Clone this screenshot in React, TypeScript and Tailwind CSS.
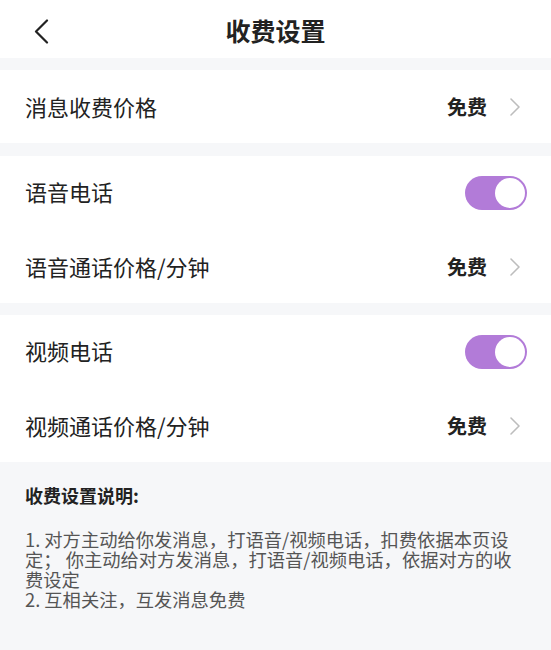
import React from "react";

const font = { fontFamily: '"Noto Sans CJK SC", "Noto Sans", sans-serif' };

function Chevron() {
  return (
    <svg width="12" height="20" viewBox="0 0 12 20" fill="none">
      <path d="M2 2 L10 10 L2 18" stroke="#bdbdbd" strokeWidth="1.6" strokeLinecap="round" strokeLinejoin="round" />
    </svg>
  );
}

function Toggle() {
  return (
    <div className="w-[62px] h-[34px] rounded-full bg-[#b27bd8] flex items-center justify-end pr-[2px]">
      <div className="w-[30px] h-[30px] rounded-full bg-white" />
    </div>
  );
}

function PriceRow({ label }: { label: string }) {
  return (
    <div className="h-[73px] flex items-center justify-between pl-[25px] pr-[30px]">
      <span className="text-[22px] text-[#222]">{label}</span>
      <div className="flex items-center gap-[22px]">
        <span className="text-[20px] font-bold text-[#222]">免费</span>
        <Chevron />
      </div>
    </div>
  );
}

function ToggleRow({ label }: { label: string }) {
  return (
    <div className="h-[74px] flex items-center justify-between pl-[25px] pr-[24px]">
      <span className="text-[22px] text-[#222] mb-[4px]">{label}</span>
      <Toggle />
    </div>
  );
}

export default function App() {
  return (
    <div className="w-[551px] h-[650px] bg-[#f6f7f9] flex flex-col overflow-hidden" style={font}>
      <div className="h-[58px] bg-white relative flex items-center justify-center">
        <svg className="absolute left-[34px] top-[19px]" width="15" height="25" viewBox="0 0 15 25" fill="none">
          <path d="M13 1.5 L2 12.5 L13 23.5" stroke="#222" strokeWidth="2.2" strokeLinecap="round" strokeLinejoin="round" />
        </svg>
        <span className="text-[25px] font-bold text-[#222] mt-[4px]">收费设置</span>
      </div>
      <div className="h-[12px]" />
      <div className="bg-white">
        <PriceRow label="消息收费价格" />
      </div>
      <div className="h-[13px]" />
      <div className="bg-white">
        <ToggleRow label="语音电话" />
        <PriceRow label="语音通话价格/分钟" />
      </div>
      <div className="h-[12px]" />
      <div className="bg-white">
        <ToggleRow label="视频电话" />
        <PriceRow label="视频通话价格/分钟" />
      </div>
      <div className="pl-[25px] pr-[10px] pt-[22px]">
        <div className="text-[18px] font-bold text-[#222] leading-[22px]">收费设置说明:</div>
        <div className="mt-[23px] text-[18.3px] text-[#555] leading-[20px] whitespace-nowrap">
          <div>1. 对方主动给你发消息，打语音/视频电话，扣费依据本页设</div>
          <div>定； 你主动给对方发消息，打语音/视频电话，依据对方的收</div>
          <div>费设定</div>
          <div>2. 互相关注，互发消息免费</div>
        </div>
      </div>
    </div>
  );
}
